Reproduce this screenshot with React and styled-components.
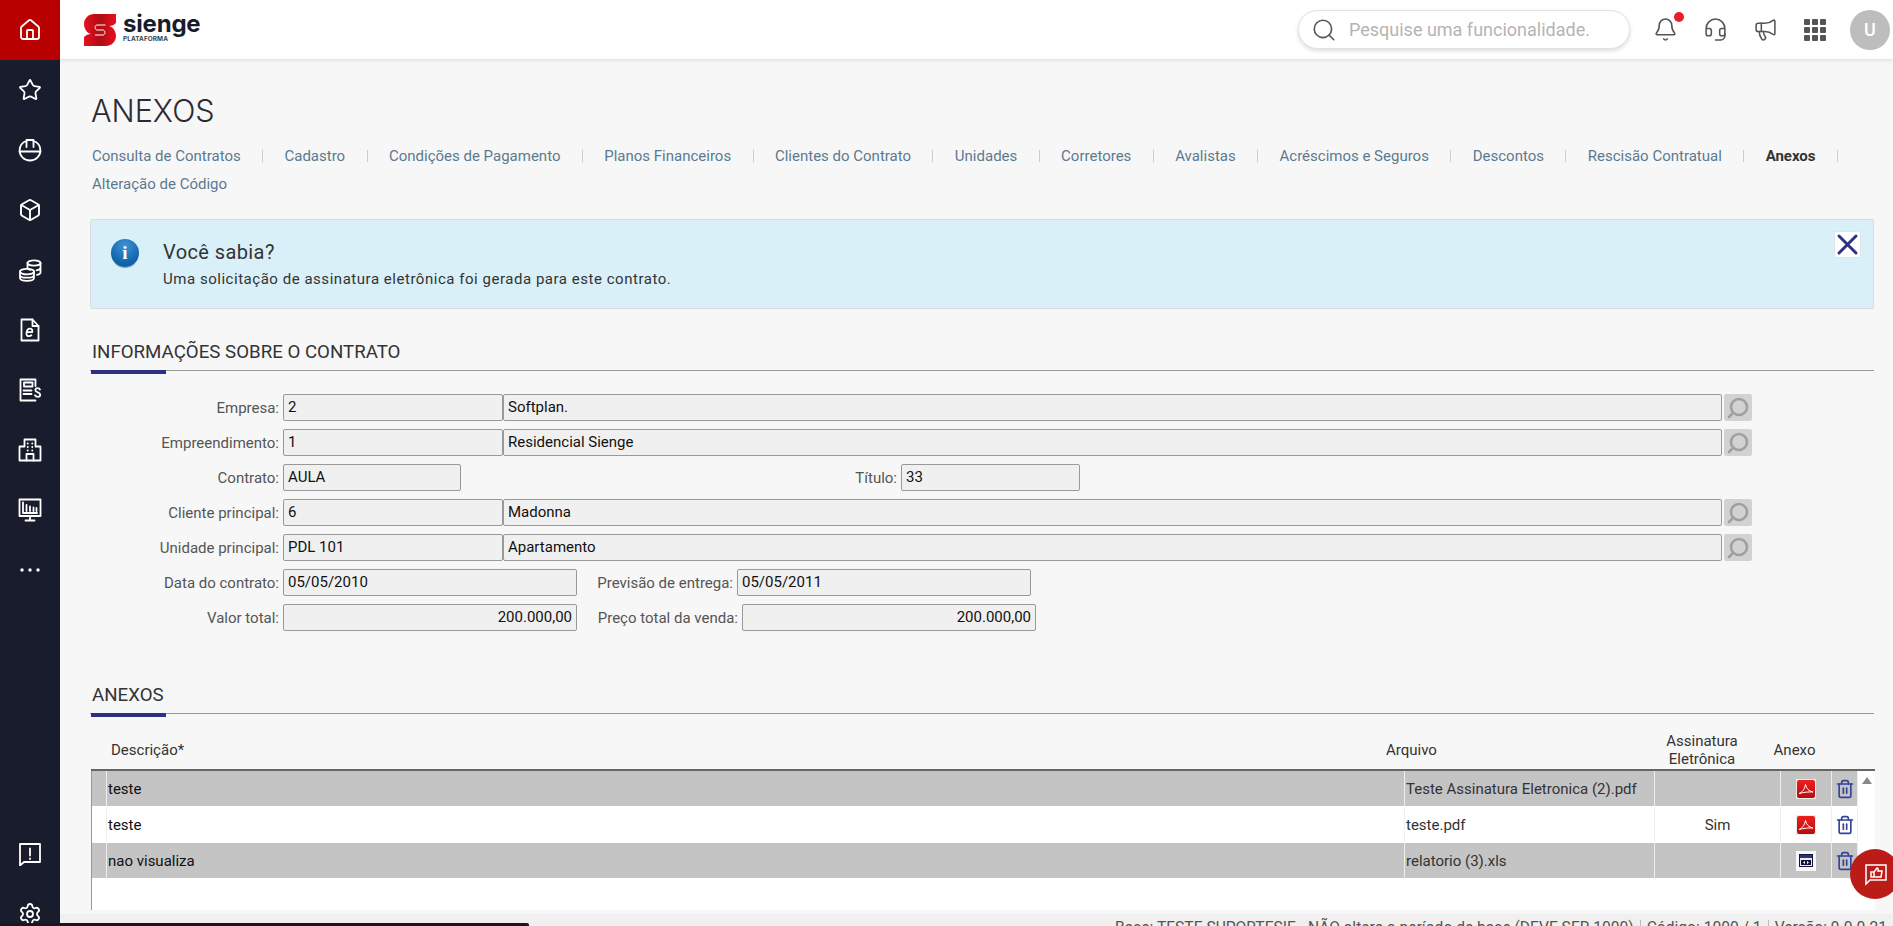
import React from "react";
import styled, { createGlobalStyle } from "styled-components";
import { House, Star, Box, Settings, Bell, Headset, Megaphone, Search, Trash2 } from "lucide-react";

const GlobalStyle = createGlobalStyle`
  html, body {
    margin: 0;
    padding: 0;
    height: 100%;
    overflow: hidden;
    background: #f7f7f7;
    font-family: Roboto, "Liberation Sans", sans-serif;
  }
  * {
    box-sizing: border-box;
  }
`;

const navLinks = [
  "Consulta de Contratos",
  "Cadastro",
  "Condições de Pagamento",
  "Planos Financeiros",
  "Clientes do Contrato",
  "Unidades",
  "Corretores",
  "Avalistas",
  "Acréscimos e Seguros",
  "Descontos",
  "Rescisão Contratual",
  "Anexos",
  "Alteração de Código",
];

const attachments = [
  { desc: "teste", file: "Teste Assinatura Eletronica (2).pdf", sign: "", type: "pdf", dark: true },
  { desc: "teste", file: "teste.pdf", sign: "Sim", type: "pdf" },
  { desc: "nao visualiza", file: "relatorio (3).xls", sign: "", type: "xls", dark: true },
];

const COLUMNS = "15px 1298px 250px 126px 51px 26px";

const Page = styled.div`
  display: flex;
  height: 926px;
  overflow: hidden;
  position: relative;
`;

const Sidebar = styled.aside`
  width: 60px;
  height: 923px;
  flex: none;
  background: #181c2c;
  display: flex;
  flex-direction: column;
  color: #fff;
  overflow: hidden;
`;

const SideItem = styled.div`
  height: 60px;
  flex: none;
  display: flex;
  align-items: center;
  justify-content: center;
  background: ${(p) => (p.$active ? "#b80000" : "transparent")};
`;

const SideBottom = styled.div`
  margin-top: auto;
  display: flex;
  flex-direction: column;
  margin-bottom: -21px;
`;

const Main = styled.div`
  flex: 1;
  min-width: 0;
  display: flex;
  flex-direction: column;
`;

const TopBar = styled.header`
  height: 59px;
  flex: none;
  background: #fff;
  box-shadow: 0 1px 4px rgba(0, 0, 0, 0.12);
  display: flex;
  align-items: center;
  padding: 0 3px 0 24px;
  position: relative;
  z-index: 2;
`;

const Logo = styled.div`
  display: flex;
  align-items: center;
  gap: 7px;
`;

const LogoText = styled.div`
  display: flex;
  flex-direction: column;
  color: #181c2c;
  margin-top: -4px;
`;

const LogoName = styled.span`
  font-family: Inter, sans-serif;
  font-weight: 700;
  font-size: 24px;
  line-height: 23px;
  letter-spacing: -0.2px;
`;

const LogoSub = styled.span`
  font-family: Inter, sans-serif;
  font-weight: 700;
  font-size: 6.4px;
  line-height: 9px;
  letter-spacing: 0.1px;
  color: #3a3d4c;
`;

const TopActions = styled.div`
  margin-left: auto;
  display: flex;
  align-items: center;
`;

const SearchBox = styled.div`
  width: 332px;
  height: 39px;
  border-radius: 20px;
  background: #fff;
  border: 1px solid #e2e2e2;
  box-shadow: 0 2px 4px rgba(0, 0, 0, 0.14);
  display: flex;
  align-items: center;
  padding-left: 12px;
  gap: 12px;
  color: #555;
  margin-right: 10px;
`;

const SearchText = styled.span`
  font-size: 18px;
  color: #b4b4b4;
  white-space: nowrap;
`;

const IconSlot = styled.div`
  width: 50px;
  height: 59px;
  position: relative;
  display: flex;
  align-items: center;
  justify-content: center;
  color: #555;
`;

const Dot = styled.span`
  position: absolute;
  top: 12px;
  left: 34px;
  width: 10px;
  height: 10px;
  border-radius: 50%;
  background: #e8202a;
`;

const GridDots = styled.div`
  display: grid;
  grid-template-columns: repeat(3, 6px);
  grid-auto-rows: 6px;
  gap: 2px;
  span {
    background: #555;
    border-radius: 1px;
  }
`;

const Avatar = styled.div`
  width: 40px;
  height: 40px;
  border-radius: 50%;
  background: #bdbdbd;
  color: #fff;
  font-size: 18px;
  font-weight: 500;
  display: flex;
  align-items: center;
  justify-content: center;
  margin-left: 10px;
`;

const Content = styled.main`
  flex: 1;
  min-height: 0;
  display: flex;
  flex-direction: column;
  padding: 34px 19px 0 30px;
  overflow: hidden;
`;

const Title = styled.h1`
  margin: 0 0 0 1px;
  font-family: Inter, sans-serif;
  font-weight: 300;
  font-size: 30.5px;
  line-height: 36px;
  color: #2b2b33;
`;

const Nav = styled.nav`
  display: flex;
  flex-wrap: wrap;
  margin: 13px 0 0 2px;
  width: 1782px;
`;

const NavLink = styled.a`
  font-size: 15px;
  line-height: 28px;
  color: ${(p) => (p.$active ? "#333" : "#5b7a90")};
  font-weight: ${(p) => (p.$active ? 700 : 400)};
  white-space: nowrap;
  display: flex;
  align-items: center;
  &:not(:last-child)::after {
    content: "";
    width: 1px;
    height: 12px;
    background: #ccc;
    margin: 0 21.4px;
  }
`;

const Alert = styled.section`
  height: 90px;
  flex: none;
  margin-top: 21px;
  background: #d9f0f9;
  border: 1px solid #d8dcde;
  border-radius: 2px;
  display: flex;
  position: relative;
  padding: 19px 0 0 20px;
`;

const InfoIcon = styled.div`
  width: 28px;
  height: 28px;
  flex: none;
  border-radius: 50%;
  background: radial-gradient(circle at 50% 25%, #3f93d6, #0f62a8 70%);
  color: #fff;
  display: flex;
  align-items: center;
  justify-content: center;
  font: 700 19px "Liberation Serif", serif;
  box-shadow: 0 2px 1px -1px rgba(60, 80, 90, 0.5);
`;

const AlertBody = styled.div`
  margin-left: 24px;
`;

const AlertTitle = styled.div`
  font-size: 20px;
  line-height: 26px;
  color: #333;
  letter-spacing: 0.4px;
`;

const AlertText = styled.div`
  font-size: 15px;
  line-height: 22px;
  margin-top: 3px;
  color: #333;
  letter-spacing: 0.53px;
`;

const CloseButton = styled.div`
  position: absolute;
  top: 11px;
  right: 12px;
  width: 27px;
  height: 27px;
  background: #fff;
  border: 1px solid #e4e4e4;
  color: #2d3184;
  display: flex;
  align-items: center;
  justify-content: center;
`;

const Section = styled.section`
  margin-top: ${(p) => p.$top}px;
  flex: none;
`;

const SectionTitle = styled.h2`
  margin: 0;
  height: 32px;
  font-size: 18.7px;
  font-weight: 400;
  line-height: 26px;
  color: #333;
  padding-left: 2px;
  border-bottom: 1px solid #999;
  position: relative;
  &::after {
    content: "";
    position: absolute;
    left: 1px;
    bottom: -4px;
    width: 75px;
    height: 4px;
    background: #2d3184;
  }
`;

const Form = styled.div`
  margin-top: 19px;
`;

const Row = styled.div`
  display: flex;
  align-items: center;
  height: 35px;
`;

const Label = styled.label`
  width: ${(p) => p.$w}px;
  flex: none;
  text-align: right;
  padding-right: 4px;
  font-size: 15px;
  color: #555;
  white-space: nowrap;
`;

const Field = styled.div`
  width: ${(p) => p.$w}px;
  height: 27px;
  flex: none;
  background: #f0f0f0;
  border: 1px solid #999;
  border-radius: 2px;
  font-size: 15px;
  line-height: 25px;
  padding: 0 4px;
  color: #111;
  text-align: ${(p) => (p.$right ? "right" : "left")};
`;

const LookupButton = styled.div`
  width: 28px;
  height: 27px;
  margin-left: 2px;
  background: #d2d2d2;
  border-radius: 2px;
  color: #a0a0a0;
  display: flex;
  align-items: center;
  justify-content: center;
  svg {
    transform: scaleX(-1);
  }
`;

const TableHead = styled.div`
  display: grid;
  grid-template-columns: ${COLUMNS};
  width: 1784px;
  height: 41px;
  margin-top: 16px;
  margin-left: 1px;
  border-bottom: 2px solid #666;
  font-size: 15px;
  color: #333;
  align-items: center;
`;

const HeadCell = styled.div`
  text-align: ${(p) => p.$align || "left"};
  transform: ${(p) => (p.$shift ? `translateX(${p.$shift}px)` : "none")};
  line-height: 18px;
  white-space: nowrap;
`;

const TableBody = styled.div`
  width: 1784px;
  height: 139px;
  margin-left: 1px;
  background: #fff;
  border-left: 1px solid #999;
  position: relative;
`;

const TableRow = styled.div`
  display: grid;
  grid-template-columns: ${COLUMNS};
  width: 1766px;
  height: 35px;
  margin-bottom: 1px;
  background: ${(p) => (p.$dark ? "#c4c4c4" : "#fff")};
`;

const Cell = styled.div`
  border-right: 1px solid #eee;
  display: flex;
  align-items: center;
  justify-content: ${(p) => (p.$center ? "center" : "flex-start")};
  padding-left: ${(p) => (p.$center ? 0 : 1)}px;
  font-size: 15px;
  color: ${(p) => p.$color || "#111"};
`;

const ScrollArrow = styled.span`
  position: absolute;
  top: 6px;
  right: 3px;
  width: 0;
  height: 0;
  border-left: 5px solid transparent;
  border-right: 5px solid transparent;
  border-bottom: 7px solid #888;
`;

const FileBadge = styled.div`
  width: 20px;
  height: 20px;
  display: flex;
  align-items: center;
  justify-content: center;
  background: ${(p) => (p.$light ? "#f8f8f8" : "#ececec")};
`;

const Footer = styled.footer`
  position: absolute;
  left: 60px;
  right: 0;
  top: 914px;
  height: 12px;
  background: #f0f0f0;
  overflow: hidden;
  display: flex;
  justify-content: flex-end;
  font-size: 15.6px;
  color: #555;
  padding-top: 6px;
  white-space: nowrap;
  line-height: 16px;
`;

const FooterItem = styled.span`
  padding: 0 6px;
  &:not(:last-child) {
    border-right: 1px solid #bbb;
  }
`;

const TaskBar = styled.div`
  position: absolute;
  left: 0;
  bottom: 0;
  width: 529px;
  height: 3px;
  background: #1c1420;
  border-top-right-radius: 2px;
`;

const Fab = styled.div`
  position: absolute;
  left: 1850px;
  top: 849px;
  width: 50px;
  height: 50px;
  border-radius: 50%;
  background: #bc1c18;
  color: #fff;
  display: flex;
  align-items: center;
  padding-left: 14px;
`;

const Wire = ({ children, size = 24, sw = 1.8 }) => (
  <svg width={size} height={size} viewBox="0 0 24 24" fill="none" stroke="currentColor" strokeWidth={sw} strokeLinecap="round" strokeLinejoin="round">
    {children}
  </svg>
);

const HatIcon = () => (
  <Wire>
    <path d="M8.5 3C4.500 4.300 1.600 8 1.600 12.500c0 5.600 4.700 10 10.400 10s10.400-4.400 10.400-10C22.400 8 19.500 4.300 15.500 3" />
    <path d="M1.600 13.500h20.800M8.500 9V2h7v7" />
  </Wire>
);

const CoinsIcon = () => (
  <Wire>
    <ellipse cx="16" cy="5" rx="6.5" ry="2.6" />
    <path d="M9.5 5v5c0 .8 1 1.4 2.5 1.9M22.5 5v9.5c0 1.2-1.5 2-3.5 2.4M22.5 9.8c0 1.2-1.800 2.200-4 2.500" />
    <ellipse cx="9" cy="13.6" rx="7" ry="2.8" />
    <path d="M2 13.6v6.4c0 1.600 3.100 2.800 7 2.800s7-1.200 7-2.800v-6.400M2 16.900c0 1.600 3.100 2.800 7 2.800s7-1.200 7-2.800" />
  </Wire>
);

const FileEIcon = () => (
  <Wire>
    <path d="M3.500 1.500h11l6 6.500v14.500h-17z" />
    <path d="M14.500 1.500v6.500h6" />
    <path d="M8.700 14.200h5.600c.3-2.300-.6-3.500-2.200-3.500-2 0-3.300 1.900-3.600 4.200-.3 2.100.7 3.300 2.400 3.300 1 0 1.800-.3 2.500-.9" />
  </Wire>
);

const ReceiptIcon = () => (
  <Wire>
    <path d="M17.500 8V1.500h-15v21h15" />
    <rect x="6" y="4.500" width="8.500" height="4" />
    <path d="M5.500 12.500h8M5.500 16h8" />
    <path d="M22 11.500c-.5-1-1.300-1.400-2.400-1.400-1.300 0-2.300.8-2.300 2 0 2.800 4.900 1.700 4.900 4.600 0 1.300-1 2.100-2.500 2.100-1.200 0-2.100-.5-2.700-1.500" />
  </Wire>
);

const BuildingIcon = () => (
  <Wire>
    <path d="M1.500 22.500V8.500h5v-7h11v7h5v14z" />
    <path d="M8.500 22.500V16h7v6.500" />
    <path d="M9.700 5.500h.1M14.200 5.500h.1M9.700 9h.1M14.200 9h.1M9.700 12.500h.1M14.200 12.500h.1" />
  </Wire>
);

const BoardIcon = () => (
  <Wire>
    <rect x="1.500" y="1.500" width="21" height="16.500" />
    <path d="M12 18v4M7.500 22.500h9" />
    <path d="M5 4.500v10.500h14M8.500 7v6M12 8.500v4.500M15.500 9.500v3.500M18.500 10v3" />
  </Wire>
);

const NoticeIcon = () => (
  <Wire>
    <path d="M2 2h20v18H6l-4 3.500z" />
    <path d="M12 6.500v7M12 16.500v.5" />
  </Wire>
);

const PdfIcon = () => (
  <svg width="18" height="18" viewBox="0 0 18 18">
    <defs>
      <linearGradient id="pdfRed" x1="0" y1="0" x2="0" y2="1">
        <stop offset="0" stopColor="#ee2020" />
        <stop offset="1" stopColor="#b80c0c" />
      </linearGradient>
    </defs>
    <rect width="18" height="18" rx="2" fill="url(#pdfRed)" />
    <path d="M2 13.500c3-1 5.500-4 6.500-9 .7 4 3.200 6.500 7.500 7.500-3.500-.3-9.500.2-14 1.500z" fill="none" stroke="#fff" strokeWidth="1" />
  </svg>
);

const XlsIcon = () => (
  <svg width="14" height="13" viewBox="0 0 14 13">
    <rect x="0.500" y="0.500" width="13" height="12" fill="#e9ecf5" stroke="#14143c" />
    <rect x="1" y="1" width="12" height="3" fill="#2d3184" />
    <rect x="2" y="6" width="10" height="5" fill="#14143c" />
    <path d="M4 8.500l2-1.500v3zM10 8.500l-2-1.500v3z" fill="#fff" />
  </svg>
);

const LogoMark = () => (
  <svg width="32" height="32" viewBox="0 0 32 32">
    <defs>
      <linearGradient id="logoRed" x1="0" y1="0" x2="1" y2="0">
        <stop offset="0" stopColor="#e8101f" />
        <stop offset="0.5" stopColor="#b00c14" />
        <stop offset="1" stopColor="#e8101f" />
      </linearGradient>
    </defs>
    <path d="M10 0H32V9C30 11 28 12 25 12C29 13 32 17 32 22C32 28 27 32 22 32H0V23C2 21 4 20 7 20C3 19 0 15 0 10C0 4 5 0 10 0Z" fill="url(#logoRed)" />
    <path d="M21.500 11H13C10.500 11 10.500 16 13 16H19C21.500 16 21.500 21 19 21H11" fill="none" stroke="#fff" strokeWidth="1" />
  </svg>
);

const Lookup = () => (
  <LookupButton>
    <Search size={24} strokeWidth={2.6} />
  </LookupButton>
);

function App() {
  return (
    <Page>
      <GlobalStyle />
      <Sidebar>
        <SideItem $active>
          <House size={24} strokeWidth={1.8} />
        </SideItem>
        <SideItem>
          <Star size={24} strokeWidth={1.8} />
        </SideItem>
        <SideItem>
          <HatIcon />
        </SideItem>
        <SideItem>
          <Box size={24} strokeWidth={1.9} />
        </SideItem>
        <SideItem>
          <CoinsIcon />
        </SideItem>
        <SideItem>
          <FileEIcon />
        </SideItem>
        <SideItem>
          <ReceiptIcon />
        </SideItem>
        <SideItem>
          <BuildingIcon />
        </SideItem>
        <SideItem>
          <BoardIcon />
        </SideItem>
        <SideItem>
          <svg width="20" height="4" viewBox="0 0 20 4" fill="currentColor">
            <circle cx="2" cy="2" r="1.700" />
            <circle cx="10" cy="2" r="1.700" />
            <circle cx="18" cy="2" r="1.700" />
          </svg>
        </SideItem>
        <SideBottom>
          <SideItem>
            <NoticeIcon />
          </SideItem>
          <SideItem>
            <Settings size={24} strokeWidth={1.8} />
          </SideItem>
        </SideBottom>
      </Sidebar>

      <Main>
        <TopBar>
          <Logo>
            <LogoMark />
            <LogoText>
              <LogoName>sienge</LogoName>
              <LogoSub>PLATAFORMA</LogoSub>
            </LogoText>
          </Logo>
          <TopActions>
            <SearchBox>
              <Search size={26} strokeWidth={1.5} />
              <SearchText>Pesquise uma funcionalidade.</SearchText>
            </SearchBox>
            <IconSlot>
              <Bell size={25} strokeWidth={1.5} />
              <Dot />
            </IconSlot>
            <IconSlot>
              <Headset size={25} strokeWidth={1.5} />
            </IconSlot>
            <IconSlot>
              <Megaphone size={25} strokeWidth={1.5} />
            </IconSlot>
            <IconSlot>
              <GridDots>
                {Array.from({ length: 9 }, (_, i) => (
                  <span key={i} />
                ))}
              </GridDots>
            </IconSlot>
            <Avatar>U</Avatar>
          </TopActions>
        </TopBar>

        <Content>
          <Title>ANEXOS</Title>
          <Nav>
            {navLinks.map((link) => (
              <NavLink key={link} $active={link === "Anexos"}>
                {link}
              </NavLink>
            ))}
          </Nav>

          <Alert>
            <InfoIcon>i</InfoIcon>
            <AlertBody>
              <AlertTitle>Você sabia?</AlertTitle>
              <AlertText>Uma solicitação de assinatura eletrônica foi gerada para este contrato.</AlertText>
            </AlertBody>
            <CloseButton>
              <svg width="23" height="23" viewBox="0 0 23 23" stroke="currentColor" strokeWidth="3" strokeLinecap="round">
                <path d="M3 3l17 17M20 3L3 20" />
              </svg>
            </CloseButton>
          </Alert>

          <Section $top={30}>
            <SectionTitle>INFORMAÇÕES SOBRE O CONTRATO</SectionTitle>
            <Form>
              <Row>
                <Label $w={193}>Empresa:</Label>
                <Field $w={220}>2</Field>
                <Field $w={1219}>Softplan.</Field>
                <Lookup />
              </Row>
              <Row>
                <Label $w={193}>Empreendimento:</Label>
                <Field $w={220}>1</Field>
                <Field $w={1219}>Residencial Sienge</Field>
                <Lookup />
              </Row>
              <Row>
                <Label $w={193}>Contrato:</Label>
                <Field $w={178}>AULA</Field>
                <Label $w={440}>Título:</Label>
                <Field $w={179}>33</Field>
              </Row>
              <Row>
                <Label $w={193}>Cliente principal:</Label>
                <Field $w={220}>6</Field>
                <Field $w={1219}>Madonna</Field>
                <Lookup />
              </Row>
              <Row>
                <Label $w={193}>Unidade principal:</Label>
                <Field $w={220}>PDL 101</Field>
                <Field $w={1219}>Apartamento</Field>
                <Lookup />
              </Row>
              <Row>
                <Label $w={193}>Data do contrato:</Label>
                <Field $w={294}>05/05/2010</Field>
                <Label $w={160}>Previsão de entrega:</Label>
                <Field $w={294}>05/05/2011</Field>
              </Row>
              <Row>
                <Label $w={193}>Valor total:</Label>
                <Field $w={294} $right>200.000,00</Field>
                <Label $w={165}>Preço total da venda:</Label>
                <Field $w={294} $right>200.000,00</Field>
              </Row>
            </Form>
          </Section>

          <Section $top={47}>
            <SectionTitle>ANEXOS</SectionTitle>
            <TableHead>
              <div />
              <HeadCell $shift={5}>Descrição*</HeadCell>
              <HeadCell $shift={-18}>Arquivo</HeadCell>
              <HeadCell $align="center" $shift={-15}>
                Assinatura
                <br />
                Eletrônica
              </HeadCell>
              <HeadCell $align="center" $shift={-11}>Anexo</HeadCell>
              <div />
            </TableHead>
            <TableBody>
              {attachments.map((a, i) => (
                <TableRow key={i} $dark={a.dark}>
                  <Cell />
                  <Cell>{a.desc}</Cell>
                  <Cell $color="#333">{a.file}</Cell>
                  <Cell $center $color="#333">{a.sign}</Cell>
                  <Cell $center>
                    <FileBadge $light={a.type === "xls"}>{a.type === "pdf" ? <PdfIcon /> : <XlsIcon />}</FileBadge>
                  </Cell>
                  <Cell $center $color="#34449a">
                    <Trash2 size={20} strokeWidth={2} />
                  </Cell>
                </TableRow>
              ))}
              <ScrollArrow />
            </TableBody>
          </Section>
        </Content>
      </Main>

      <Footer>
        <FooterItem>Base: TESTE SUPORTESIE - NÃO altere o período de base (DEVE SER 1000)</FooterItem>
        <FooterItem>Código: 1000 / 1</FooterItem>
        <FooterItem>Versão: 9.0.0.21</FooterItem>
      </Footer>
      <TaskBar />
      <Fab>
        <svg width="24" height="24" viewBox="0 0 24 24" fill="none" stroke="currentColor" strokeWidth="1.500">
          <path d="M2 3h20v15H6l-4 4z" />
          <path d="M7 10h3v5H7zM10 10l3-4c1 0 1.500 1 1 3h4l-1 6h-7" />
        </svg>
      </Fab>
    </Page>
  );
}

export default App;
